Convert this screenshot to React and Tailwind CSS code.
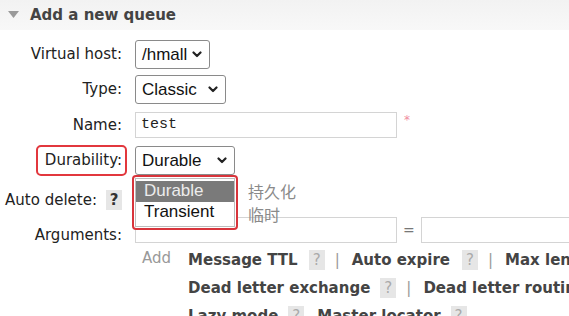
const Chevron = () => (
  <svg width="10" height="7" viewBox="0 0 10 7">
    <path
      d="M1.5 1.5 L5 5 L8.5 1.5"
      fill="none"
      stroke="#222"
      strokeWidth="2.2"
      strokeLinecap="round"
      strokeLinejoin="round"
    />
  </svg>
);

const Select = ({ value, width }) => (
  <div
    className={`flex items-center justify-between h-[29px] border border-[#8a8a8a] rounded-[3px] bg-white pl-[6px] pr-[7px] font-['Liberation_Sans',sans-serif] text-[17px] text-[#111] ${width}`}
  >
    <span>{value}</span>
    <Chevron />
  </div>
);

const Help = ({ dark }) => (
  <span
    className={`inline-flex items-center justify-center w-[16px] h-[20px] bg-[#e6e6e6] text-[15px] ${
      dark ? "text-[#333] font-bold" : "text-[#aaa]"
    }`}
  >
    ?
  </span>
);

const Pipe = () => <span className="ml-[10px] mr-[12px] text-[#999]">|</span>;

const Label = ({ children }) => (
  <div className="w-[122px] shrink-0 text-right text-[15px] text-[#222]">{children}</div>
);

const App = () => {
  return (
    <div className="relative w-[569px] h-[316px] overflow-hidden bg-white font-['DejaVu_Sans',sans-serif]">
      {/* HEADER */}
      <div className="flex items-center h-[30px] bg-gradient-to-b from-[#f2f2f2] to-[#f8f8f8] pl-[8px]">
        <svg width="11" height="8" viewBox="0 0 11 8">
          <path d="M0 0 H11 L5.5 7 Z" fill="#9a9a9a" />
        </svg>
        <span className="ml-[11px] text-[15px] font-bold text-[#444]">Add a new queue</span>
      </div>

      {/* FORM */}
      <div className="flex flex-col">
        {/* Virtual host */}
        <div className="flex items-center h-[29px] mt-[10px]">
          <Label>Virtual host:</Label>
          <div className="ml-[13px]">
            <Select value="/hmall" width="w-[75px]" />
          </div>
        </div>

        {/* Type */}
        <div className="flex items-center h-[29px] mt-[6px]">
          <Label>Type:</Label>
          <div className="ml-[13px]">
            <Select value="Classic" width="w-[91px]" />
          </div>
        </div>

        {/* Name */}
        <div className="flex items-center h-[26px] mt-[8px]">
          <Label>Name:</Label>
          <div className="ml-[13px] flex items-start">
            <div className="w-[262px] h-[26px] border border-[#d4d4d4] pl-[5px] flex items-center font-['Liberation_Mono',monospace] text-[15px] text-[#222]">
              test
            </div>
            <span className="ml-[7px] -mt-[1px] text-[12px] text-[#f08ca0]">*</span>
          </div>
        </div>

        {/* Durability */}
        <div className="flex items-center h-[29px] mt-[8px]">
          <Label>
            <span className="relative">
              Durability:
              <span className="absolute -left-[9px] -right-[5px] -top-[6px] -bottom-[7px] border-2 border-[#e2373d] rounded-[5px]" />
            </span>
          </Label>
          <div className="relative ml-[13px]">
            <Select value="Durable" width="w-[100px]" />

            {/* OPEN LIST */}
            <div className="absolute z-10 left-[-3px] top-[29px] w-[106px] h-[55px] border-2 border-[#d8343b] rounded-[4px] bg-white p-[1px]">
              <div className="border border-[#bdbdbd] h-full bg-white pt-[2px] font-['Liberation_Sans',sans-serif] text-[17px] leading-[20px]">
                <div className="bg-[#7a7a7a] text-[#ececec] pl-[8px] h-[21px]">Durable</div>
                <div className="text-[#111] pl-[8px] h-[21px]">Transient</div>
              </div>
            </div>
            <div className="absolute z-10 left-[113px] top-[34px] whitespace-nowrap font-['Noto_Sans_CJK_SC',sans-serif] text-[16px] leading-[23px] text-[#8a8a8a]">
              <div>持久化</div>
              <div>临时</div>
            </div>
          </div>
        </div>

        {/* Auto delete */}
        <div className="flex items-center h-[20px] mt-[15px]">
          <div className="w-[122px] shrink-0 flex items-center justify-end text-[15px] text-[#222]">
            <span>Auto delete:</span>
            <span className="ml-[9px]">
              <Help dark />
            </span>
          </div>
        </div>

        {/* Arguments */}
        <div className="flex items-start h-[26px] mt-[7px]">
          <div className="w-[122px] shrink-0 text-right text-[15px] leading-[17px] text-[#222] pt-[10px]">
            Arguments:
          </div>
          <div className="ml-[13px] flex items-center">
            <div className="w-[262px] h-[26px] border border-[#d4d4d4]" />
            <span className="mx-[6px] text-[14px] text-[#777]">=</span>
            <div className="w-[160px] h-[26px] border border-[#d4d4d4]" />
          </div>
        </div>

        {/* Add */}
        <div className="flex items-start mt-[3px] whitespace-nowrap">
          <div className="w-[142px] shrink-0" />
          <span className="text-[15px] text-[#999] leading-[28px] -mt-[2px]">Add</span>
          <div className="ml-[17px] flex flex-col text-[15px] font-bold text-[#444] leading-[28px]">
            <div className="flex items-center">
              <span>Message TTL</span>
              <span className="ml-[11px] font-normal"><Help /></span>
              <span className="font-normal"><Pipe /></span>
              <span>Auto expire</span>
              <span className="ml-[12px] font-normal"><Help /></span>
              <span className="font-normal"><Pipe /></span>
              <span>Max length</span>
            </div>
            <div className="flex items-center">
              <span>Dead letter exchange</span>
              <span className="ml-[10px] font-normal"><Help /></span>
              <span className="font-normal"><Pipe /></span>
              <span>Dead letter routing key</span>
            </div>
            <div className="flex items-center">
              <span>Lazy mode</span>
              <span className="ml-[10px] font-normal"><Help /></span>
              <span className="ml-[13px]">Master locator</span>
              <span className="ml-[10px] font-normal"><Help /></span>
            </div>
          </div>
        </div>
      </div>
    </div>
  );
};

export default App;
